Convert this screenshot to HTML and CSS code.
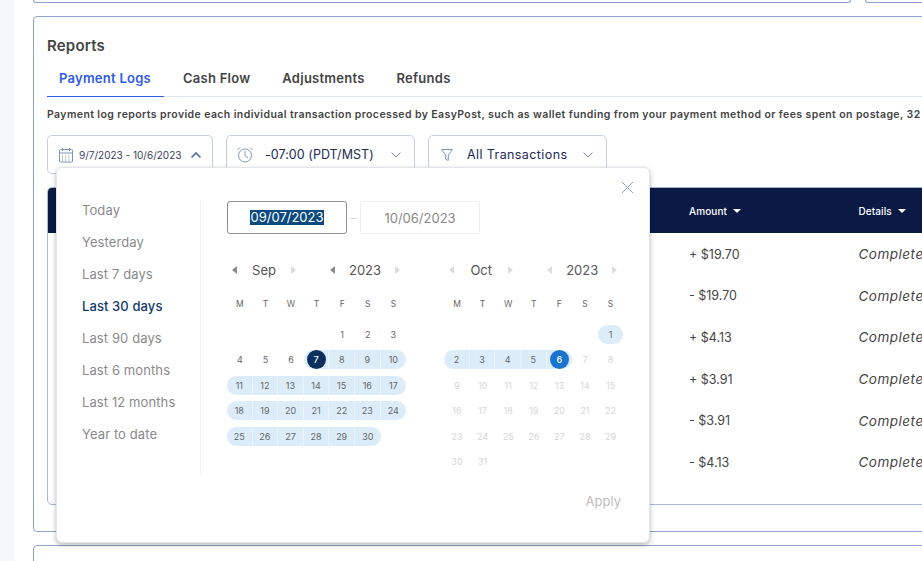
FILE: index.html
```html
<!DOCTYPE html>
<html lang="en">
<head>
<meta charset="utf-8">
<title>Reports</title>
<link rel="stylesheet" href="styles.css">
</head>
<body>
<div class="page">
  <div class="rail"></div>
  <main class="main">
    <div class="top-row"><div class="top-card wide"></div><div class="top-card side"></div></div>
    <section class="card reports">
      <h2 class="title">Reports</h2>
      <nav class="tabs">
        <a class="tab active">Payment Logs</a>
        <a class="tab">Cash Flow</a>
        <a class="tab">Adjustments</a>
        <a class="tab">Refunds</a>
      </nav>
      <p class="desc">Payment log reports provide each individual transaction processed by EasyPost, such as wallet funding from your payment method or fees spent on postage, 32</p>
      <div class="filters">
        <div class="filter f-date">
          <svg class="ico" width="16" height="16" viewBox="0 0 16 16" fill="none" stroke="#7f93bd" stroke-width="1"><rect x="1.5" y="2.5" width="13" height="12.5" rx="1"/><path d="M1.5 6h13M4.5 1v3M11.5 1v3"/><path d="M4 9h1.500M7.200 9h1.500M10.500 9h1.500M4 11h1.500M7.200 11h1.500M10.500 11h1.500M4 13h1.500M7.200 13h1.500M10.500 13h1.500" stroke-dasharray="1 .5"/></svg>
          <span class="date-text">9/7/2023 - 10/6/2023</span>
          <svg class="chev-up" width="12" height="8" viewBox="0 0 12 8" fill="none" stroke="#4f6fa5" stroke-width="1.600"><path d="M1.500 6.500 6 2l4.500 4.500"/></svg>
        </div>
        <div class="filter f-zone">
          <svg class="ico" width="18" height="17" viewBox="0 0 18 17" fill="none" stroke="#8296bf" stroke-width="1"><circle cx="9" cy="9.500" r="6.500"/><path d="M9 5v4.700l3 2.300M1.500 4 4 1.500M16.500 4 14 1.500"/></svg>
          <span class="filter-text">-07:00 (PDT/MST)</span>
          <svg class="chev" width="12" height="8" viewBox="0 0 12 8" fill="none" stroke="#6f86b4" stroke-width="1"><path d="M1.500 1.500 6 6l4.500-4.500"/></svg>
        </div>
        <div class="filter f-type">
          <svg class="ico" width="14" height="14" viewBox="0 0 14 14" fill="none" stroke="#7f93bd" stroke-width="1"><path d="M1.500 1.500h11L8.300 7v5.500l-2.600-1.300V7z"/></svg>
          <span class="filter-text">All Transactions</span>
          <svg class="chev" width="12" height="8" viewBox="0 0 12 8" fill="none" stroke="#6f86b4" stroke-width="1"><path d="M1.500 1.500 6 6l4.500-4.500"/></svg>
        </div>
      </div>
      <div class="table-card">
        <div class="t-head">
          <div class="t-hidden"></div>
          <div class="t-h">Amount <i class="caret"></i></div>
          <div class="t-h">Details <i class="caret"></i></div>
        </div>
        <div class="t-row"><div class="t-hidden"></div><div class="amt">+ $19.70</div><div class="det">Completed</div></div>
        <div class="t-row"><div class="t-hidden"></div><div class="amt">- $19.70</div><div class="det">Completed</div></div>
        <div class="t-row"><div class="t-hidden"></div><div class="amt">+ $4.13</div><div class="det">Completed</div></div>
        <div class="t-row"><div class="t-hidden"></div><div class="amt">+ $3.91</div><div class="det">Completed</div></div>
        <div class="t-row"><div class="t-hidden"></div><div class="amt">- $3.91</div><div class="det">Completed</div></div>
        <div class="t-row"><div class="t-hidden"></div><div class="amt">- $4.13</div><div class="det">Completed</div></div>
      </div>
    </section>
    <section class="card next"></section>
  </main>
</div>

<div class="popover">
  <svg class="close" width="13" height="13" viewBox="0 0 13 13" fill="none" stroke="#8ea2c9" stroke-width="1"><path d="M1 1l11 11M12 1 1 12"/></svg>
  <aside class="presets">
    <div class="preset">Today</div>
    <div class="preset">Yesterday</div>
    <div class="preset">Last 7 days</div>
    <div class="preset current">Last 30 days</div>
    <div class="preset">Last 90 days</div>
    <div class="preset">Last 6 months</div>
    <div class="preset">Last 12 months</div>
    <div class="preset">Year to date</div>
  </aside>
  <div class="panel">
    <div class="inputs">
      <div class="d-input focus"><span class="sel">09/07/2023</span></div>
      <div class="dash"></div>
      <div class="d-input">10/06/2023</div>
    </div>
    <div class="cals">
      <div class="cal">
        <div class="nav">
          <div class="nav-group g-month"><i class="arr left"></i><span>Sep</span><i class="arr right faint"></i></div>
          <div class="nav-group g-year"><i class="arr left"></i><span>2023</span><i class="arr right faint"></i></div>
        </div>
        <div class="dows"><span>M</span><span>T</span><span>W</span><span>T</span><span>F</span><span>S</span><span>S</span></div>
        <div class="days">
          <div></div><div></div><div></div><div></div><div class="d">1</div><div class="d">2</div><div class="d">3</div>
          <div class="d">4</div><div class="d">5</div><div class="d">6</div><div class="d r first"><b class="pick navy">7</b></div><div class="d r">8</div><div class="d r">9</div><div class="d r last">10</div>
          <div class="d r first">11</div><div class="d r">12</div><div class="d r">13</div><div class="d r">14</div><div class="d r">15</div><div class="d r">16</div><div class="d r last">17</div>
          <div class="d r first">18</div><div class="d r">19</div><div class="d r">20</div><div class="d r">21</div><div class="d r">22</div><div class="d r">23</div><div class="d r last">24</div>
          <div class="d r first">25</div><div class="d r">26</div><div class="d r">27</div><div class="d r">28</div><div class="d r">29</div><div class="d r last">30</div><div></div>
        </div>
      </div>
      <div class="cal">
        <div class="nav">
          <div class="nav-group g-month"><i class="arr left faint"></i><span>Oct</span><i class="arr right faint"></i></div>
          <div class="nav-group g-year"><i class="arr left faint"></i><span>2023</span><i class="arr right faint"></i></div>
        </div>
        <div class="dows"><span>M</span><span>T</span><span>W</span><span>T</span><span>F</span><span>S</span><span>S</span></div>
        <div class="days">
          <div></div><div></div><div></div><div></div><div></div><div></div><div class="d r first last">1</div>
          <div class="d r first">2</div><div class="d r">3</div><div class="d r">4</div><div class="d r">5</div><div class="d r last"><b class="pick blue">6</b></div><div class="d off">7</div><div class="d off">8</div>
          <div class="d off">9</div><div class="d off">10</div><div class="d off">11</div><div class="d off">12</div><div class="d off">13</div><div class="d off">14</div><div class="d off">15</div>
          <div class="d off">16</div><div class="d off">17</div><div class="d off">18</div><div class="d off">19</div><div class="d off">20</div><div class="d off">21</div><div class="d off">22</div>
          <div class="d off">23</div><div class="d off">24</div><div class="d off">25</div><div class="d off">26</div><div class="d off">27</div><div class="d off">28</div><div class="d off">29</div>
          <div class="d off">30</div><div class="d off">31</div>
        </div>
      </div>
    </div>
    <div class="actions"><span class="apply">Apply</span></div>
  </div>
</div>
</body>
</html>
```

FILE: styles.css
```css
* { box-sizing: border-box; }
html, body { margin: 0; height: 561px; overflow: hidden; background: #fff; }
body { font-family: "Inter", "Open Sans", sans-serif; color: #444; position: relative; }

.page { display: flex; width: 922px; height: 561px; overflow: hidden; }
.rail { flex: 0 0 14px; background: #f4f8f9; }
.main { flex: 0 0 1100px; padding-left: 19px; }

.top-row { display: flex; gap: 14px; height: 3px; }
.top-card { height: 3px; border: 1px solid #8ea2c9; border-top: 0; border-radius: 0 0 5px 5px; }
.top-card.wide { width: 818px; }
.top-card.side { width: 200px; }

.card { border: 1px solid #8ea2c9; border-radius: 4px; width: 1040px; }
.reports { height: 516px; margin-top: 13px; padding: 18px 13px 0; }
.next { height: 40px; margin-top: 13px; }

.title { margin: 0; font-size: 15px; line-height: 22px; font-weight: 600; color: #444; letter-spacing: .2px; }

.tabs { display: flex; margin-top: 12px; height: 28px; border-bottom: 1px solid #dfe5f1; }
.tab { font-size: 13px; line-height: 18px; font-weight: 600; color: #444; padding: 0 16px; height: 28px; white-space: nowrap; letter-spacing: .25px; }
.tab.active { color: #2f5be7; border-bottom: 1px solid #2f5be7; padding: 0 12px; width: 117px; }
.tab:nth-child(2) { padding-left: 19px; }

.desc { margin: 11px 0 0; font-size: 10.500px; line-height: 14px; font-weight: 600; color: #444; white-space: nowrap; letter-spacing: .4px; }

.filters { display: flex; gap: 13px; margin-top: 13px; }
.filter { display: flex; align-items: center; height: 39px; border: 1px solid #c5cfe2; border-radius: 5px; color: #1c2a55; }
.f-date { width: 166px; padding-left: 10px; }
.f-zone { width: 189px; padding-left: 9px; }
.f-type { width: 179px; padding-left: 11px; }
.date-text { font-size: 10px; margin-left: 5px; color: #3a4160; white-space: nowrap; width: 104px; }
.chev-up { margin-left: 7px; }
.filter-text { font-size: 12.500px; letter-spacing: .4px; white-space: nowrap; }
.f-zone .filter-text { margin-left: 11px; width: 125px; letter-spacing: .05px; }
.f-type .filter-text { margin-left: 13px; width: 115px; }

.table-card { margin-top: 13px; height: 318px; border: 1px solid #a9b8d6; border-radius: 5px; width: 1000px; }
.t-head, .t-row { display: grid; grid-template-columns: 641px 169.500px 1fr; align-items: center; }
.t-head { height: 45px; background: #0a1a45; border-radius: 4px 4px 0 0; }
.t-h { font-size: 10px; font-weight: 500; color: #fff; display: flex; align-items: center; gap: 6px; letter-spacing: .1px; }
.caret { width: 0; height: 0; border-left: 4px solid transparent; border-right: 4px solid transparent; border-top: 4px solid #fff; }
.t-row { height: 41.600px; font-size: 12.500px; color: #444; padding-top: 1px; }
.det { font-style: italic; white-space: nowrap; font-size: 13.500px; letter-spacing: .5px; }

.popover { position: absolute; left: 56px; top: 167px; width: 594px; height: 376px; background: #fff; border: 1px solid #e3e5ea; border-radius: 6px; box-shadow: 0 2px 5px rgba(0, 0, 0, .28); display: flex; align-items: flex-start; }
.close { position: absolute; left: 564px; top: 13px; }

.presets { margin: 32px 0 0 25px; width: 119px; height: 275px; border-right: 1px solid #f0f1f3; display: flex; flex-direction: column; gap: 12px; flex: none; }
.preset { font-size: 13px; line-height: 20px; color: #8a8a8a; white-space: nowrap; letter-spacing: .1px; }
.preset.current { color: #143a6b; font-weight: 500; }

.panel { margin: 33px 0 0 26px; width: 396px; flex: none; }
.inputs { display: flex; height: 33px; }
.d-input { width: 120px; height: 33px; border: 1px solid #eceef2; border-radius: 2px; font-size: 13px; color: #8a8a8a; display: flex; align-items: center; justify-content: center; }
.d-input.focus { border-color: #8f8f8f; border-radius: 3px; }
.sel { background: #0b4a80; color: #fff; line-height: 15px; }
.dash { width: 13px; position: relative; }
.dash::after { content: ""; display: block; width: 7px; height: 1px; background: #ddd; margin: 17px 0 0 3px; }

.cals { display: flex; gap: 38px; margin-top: 26px; }
.cal { width: 179.200px; flex: none; }
.nav { display: flex; height: 20px; padding-left: 5px; gap: 34px; }
.nav-group { display: flex; align-items: center; justify-content: space-between; font-size: 13px; color: #555; }
.g-month { width: 64px; }
.g-year { width: 70px; }
.arr { width: 0; height: 0; border-top: 4px solid transparent; border-bottom: 4px solid transparent; }
.arr.left { border-right: 5px solid #8a8a8a; }
.arr.right { border-left: 5px solid #8a8a8a; }
.arr.left.faint { border-right-color: #dcdcdc; }
.arr.right.faint { border-left-color: #dcdcdc; }

.dows { display: grid; grid-template-columns: repeat(7, 25.600px); margin-top: 17px; height: 14px; font-size: 8.500px; line-height: 14px; color: #666; text-align: center; }

.days { display: grid; grid-template-columns: repeat(7, 25.600px); grid-auto-rows: 19px; row-gap: 6.600px; margin-top: 13.500px; height: 147px; font-size: 9px; color: #666; }
.d { display: flex; align-items: center; justify-content: center; position: relative; }
.r { background: #dcecf9; border-right: 1px solid rgba(255, 255, 255, .45); }
.first { border-radius: 10px 0 0 10px; }
.last { border-radius: 0 10px 10px 0; border-right: 0; }
.first.last { border-radius: 10px; }
.off { color: #d6d6d6; }
.pick { width: 19px; height: 19px; border-radius: 50%; color: #fff; font-weight: 500; display: flex; align-items: center; justify-content: center; }
.navy { background: #0b2f5e; }
.blue { background: #1a73d0; }

.actions { display: flex; justify-content: flex-end; margin-top: 19.500px; padding-right: 2px; }
.apply { font-size: 13px; line-height: 20px; color: #bdbdbd; }
```
